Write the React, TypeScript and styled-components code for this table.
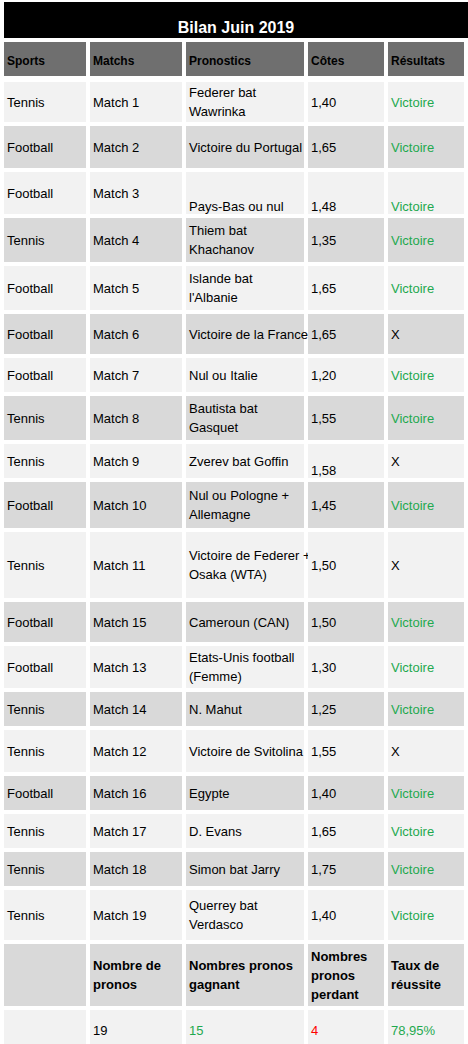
import styled, { createGlobalStyle } from 'styled-components'

const GlobalStyle = createGlobalStyle`
  body {
    margin: 0;
    background: #fff;
    font-family: 'Liberation Sans', Arial, sans-serif;
  }
`

const GREEN = '#1fa94f'
const RED = '#ff0000'
const LIGHT = '#f2f2f2'
const DARK = '#d9d9d9'

const Page = styled.div`
  width: 468px;
  padding: 2px 0 0 4px;
  box-sizing: border-box;
  display: flex;
  flex-direction: column;
`

const Title = styled.div`
  width: 464px;
  height: 36px;
  background: #000;
  color: #fff;
  font-weight: 700;
  font-size: 16px;
  display: flex;
  align-items: flex-end;
  justify-content: center;
  padding-bottom: 1px;
  box-sizing: border-box;
`

const Table = styled.div`
  display: flex;
  flex-direction: column;
  gap: 4px;
  margin-top: 4px;
`

const Row = styled.div<{ $h: number; $after?: number }>`
  display: grid;
  grid-template-columns: 82px 92px 118px 76px 76px;
  column-gap: 4px;
  height: ${(p) => p.$h}px;
  margin-bottom: ${(p) => p.$after ?? 0}px;
`

const Cell = styled.div<{ $bg: string; $color?: string; $bottom?: boolean; $bold?: boolean; $size?: number; $top?: number }>`
  background: ${(p) => p.$bg};
  color: ${(p) => p.$color ?? '#000'};
  font-size: ${(p) => p.$size ?? 13}px;
  font-weight: ${(p) => (p.$bold ? 700 : 400)};
  line-height: ${(p) => (p.$bottom ? 15 : 19)}px;
  padding: ${(p) => p.$top ?? 0}px 3px 0;
  box-sizing: border-box;
  display: flex;
  flex-direction: column;
  justify-content: ${(p) => (p.$bottom ? 'flex-end' : 'center')};
  white-space: nowrap;
  overflow: visible;
  position: relative;
`

type Match = {
  h: number
  sport: string
  match: string
  prono: string[]
  cote: string
  res: string
  bottom?: boolean
  coteBottom?: boolean
}

const matches: Match[] = [
  { h: 40, sport: 'Tennis', match: 'Match 1', prono: ['Federer bat', 'Wawrinka'], cote: '1,40', res: 'Victoire' },
  { h: 42, sport: 'Football', match: 'Match 2', prono: ['Victoire du Portugal'], cote: '1,65', res: 'Victoire' },
  { h: 42, sport: 'Football', match: 'Match 3', prono: ['Pays-Bas ou nul'], cote: '1,48', res: 'Victoire', bottom: true },
  { h: 44, sport: 'Tennis', match: 'Match 4', prono: ['Thiem bat', 'Khachanov'], cote: '1,35', res: 'Victoire' },
  { h: 44, sport: 'Football', match: 'Match 5', prono: ['Islande bat', "l'Albanie"], cote: '1,65', res: 'Victoire' },
  { h: 40, sport: 'Football', match: 'Match 6', prono: ['Victoire de la France'], cote: '1,65', res: 'X' },
  { h: 34, sport: 'Football', match: 'Match 7', prono: ['Nul ou Italie'], cote: '1,20', res: 'Victoire' },
  { h: 44, sport: 'Tennis', match: 'Match 8', prono: ['Bautista bat', 'Gasquet'], cote: '1,55', res: 'Victoire' },
  { h: 34, sport: 'Tennis', match: 'Match 9', prono: ['Zverev bat Goffin'], cote: '1,58', res: 'X', coteBottom: true },
  { h: 46, sport: 'Football', match: 'Match 10', prono: ['Nul ou Pologne +', 'Allemagne'], cote: '1,45', res: 'Victoire' },
  { h: 66, sport: 'Tennis', match: 'Match 11', prono: ['Victoire de Federer +', 'Osaka (WTA)'], cote: '1,50', res: 'X' },
  { h: 40, sport: 'Football', match: 'Match 15', prono: ['Cameroun (CAN)'], cote: '1,50', res: 'Victoire' },
  { h: 42, sport: 'Football', match: 'Match 13', prono: ['Etats-Unis football', '(Femme)'], cote: '1,30', res: 'Victoire' },
  { h: 34, sport: 'Tennis', match: 'Match 14', prono: ['N. Mahut'], cote: '1,25', res: 'Victoire' },
  { h: 42, sport: 'Tennis', match: 'Match 12', prono: ['Victoire de Svitolina'], cote: '1,55', res: 'X' },
  { h: 34, sport: 'Football', match: 'Match 16', prono: ['Egypte'], cote: '1,40', res: 'Victoire' },
  { h: 34, sport: 'Tennis', match: 'Match 17', prono: ['D. Evans'], cote: '1,65', res: 'Victoire' },
  { h: 34, sport: 'Tennis', match: 'Match 18', prono: ['Simon bat Jarry'], cote: '1,75', res: 'Victoire' },
  { h: 50, sport: 'Tennis', match: 'Match 19', prono: ['Querrey bat', 'Verdasco'], cote: '1,40', res: 'Victoire' },
]

const headers = ['Sports', 'Matchs', 'Pronostics', 'Côtes', 'Résultats']
const summaryLabels = [[], ['Nombre de', 'pronos'], ['Nombres pronos', 'gagnant'], ['Nombres', 'pronos', 'perdant'], ['Taux de', 'réussite']]
const summaryValues = [
  { v: '', c: '#000' },
  { v: '19', c: '#000' },
  { v: '15', c: GREEN },
  { v: '4', c: RED },
  { v: '78,95%', c: GREEN },
]

function Lines({ lines }: { lines: string[] }) {
  return (
    <>
      {lines.map((l) => (
        <span key={l}>{l}</span>
      ))}
    </>
  )
}

function App() {
  return (
    <Page>
      <GlobalStyle />
      <Title>Bilan Juin 2019</Title>
      <Table>
        <Row $h={34} $after={2}>
          {headers.map((h) => (
            <Cell key={h} $bg='#6f6f6f' $bold $size={12} $top={5}>
              {h}
            </Cell>
          ))}
        </Row>
        {matches.map((m, i) => {
          const bg = i % 2 === 0 ? LIGHT : DARK
          return (
            <Row key={m.match} $h={m.h}>
              <Cell $bg={bg}>{m.sport}</Cell>
              <Cell $bg={bg}>{m.match}</Cell>
              <Cell $bg={bg} $bottom={m.bottom}>
                <Lines lines={m.prono} />
              </Cell>
              <Cell $bg={bg} $bottom={m.bottom || m.coteBottom}>
                {m.cote}
              </Cell>
              <Cell $bg={bg} $bottom={m.bottom} $color={m.res === 'X' ? '#000' : GREEN}>
                {m.res}
              </Cell>
            </Row>
          )
        })}
        <Row $h={62}>
          {summaryLabels.map((l, i) => (
            <Cell key={i} $bg={DARK} $bold>
              <Lines lines={l} />
            </Cell>
          ))}
        </Row>
        <Row $h={40}>
          {summaryValues.map((s, i) => (
            <Cell key={i} $bg={LIGHT} $color={s.c}>
              {s.v}
            </Cell>
          ))}
        </Row>
      </Table>
    </Page>
  )
}

export default App
